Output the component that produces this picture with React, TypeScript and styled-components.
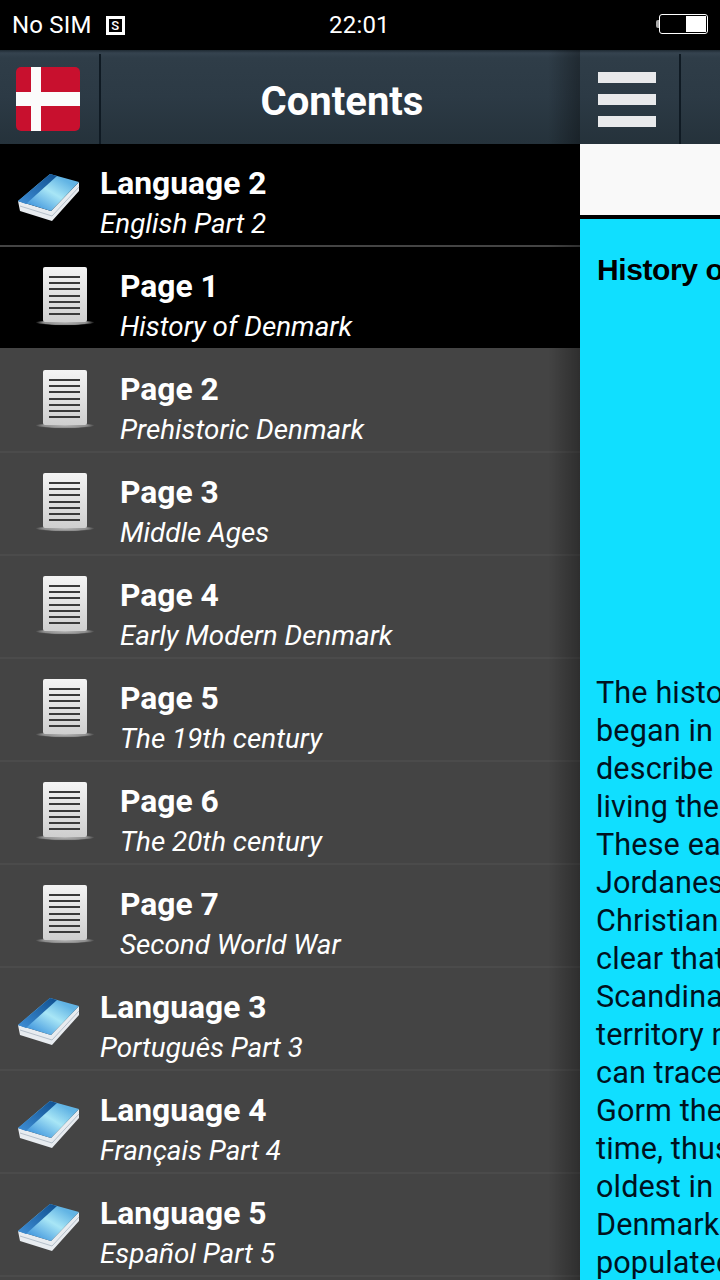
import styled, { createGlobalStyle } from "styled-components";

const GlobalStyle = createGlobalStyle`
    html, body {
        margin: 0;
        padding: 0;
        background: #000;
    }

    * {
        box-sizing: border-box;
    }
`;

const Screen = styled.div`
    width: 720px;
    height: 1280px;
    overflow: hidden;
    font-family: Roboto, "Liberation Sans", sans-serif;
    display: flex;
    flex-direction: column;
`;

const StatusBar = styled.div`
    height: 50px;
    flex: none;
    background: #000;
    color: #fff;
    display: flex;
    align-items: center;
    position: relative;
    padding: 0 12px;
    font-size: 24px;
    letter-spacing: 0.2px;
`;

const SimBadge = styled.span`
    width: 19px;
    height: 19px;
    margin-left: 14px;
    border: 3px solid #fff;
    font-size: 13px;
    font-weight: 500;
    line-height: 13px;
    text-align: center;
    letter-spacing: 0;
`;

const Clock = styled.span`
    position: absolute;
    left: 329px;
    top: 10px;
    line-height: 30px;
`;

const Battery = styled.div`
    position: absolute;
    left: 659px;
    top: 14px;
    width: 49px;
    height: 20px;
    border: 1.5px solid #fff;
    border-radius: 3px;
    padding: 1px;
    display: flex;
    justify-content: flex-end;

    &::before {
        content: "";
        position: absolute;
        left: -4px;
        top: 5px;
        width: 3px;
        height: 8px;
        border-radius: 2px 0 0 2px;
        background: #aaa;
    }
`;

const BatteryFill = styled.div`
    width: 20px;
    background: #fff;
`;

const Body = styled.div`
    flex: 1;
    display: flex;
    min-height: 0;
`;

const Drawer = styled.aside`
    width: 580px;
    flex: none;
    position: relative;
    background: #444;
    display: flex;
    flex-direction: column;

    &::after {
        content: "";
        position: absolute;
        top: 0;
        bottom: 0;
        right: 0;
        width: 32px;
        background: linear-gradient(to right, rgba(0, 0, 0, 0), rgba(0, 0, 0, 0.32));
        pointer-events: none;
    }
`;

const Bar = styled.header`
    height: 94px;
    flex: none;
    display: flex;
    background: linear-gradient(to bottom, #1f2a33 0, #35434f 3px, #2f3d48 8px, #2c3a45 50%, #25323b 100%);
`;

const IconCell = styled.div`
    width: 99px;
    flex: none;
    display: flex;
    align-items: center;
    justify-content: center;
    padding-right: 3px;
    padding-top: 4px;
`;

const Divider = styled.div`
    width: 2px;
    flex: none;
    margin-top: 4px;
    background: #0f1a23;
`;

const BarTitle = styled.h1`
    flex: 1;
    margin: 0;
    color: #fff;
    font-size: 40px;
    font-weight: 700;
    display: flex;
    align-items: center;
    justify-content: center;
    padding: 8px 0 0 3px;
`;

const Menu = styled.div`
    display: flex;
    flex-direction: column;
`;

const Row = styled.div<{ $active?: boolean; $indent?: boolean }>`
    height: 103px;
    flex: none;
    display: flex;
    align-items: center;
    background: ${(p) => (p.$active ? "#000" : "#444")};
    border-bottom: 2px solid ${(p) => (p.$active ? "#444" : "#4b4b4b")};
    padding-left: ${(p) => (p.$indent ? "36px" : "18px")};
`;

const RowIcon = styled.div<{ $indent?: boolean }>`
    width: ${(p) => (p.$indent ? "84px" : "82px")};
    flex: none;
    display: flex;
    padding-top: ${(p) => (p.$indent ? "0" : "4px")};
    padding-bottom: ${(p) => (p.$indent ? "2px" : "0")};
`;

const RowText = styled.div`
    color: #fff;
    display: flex;
    flex-direction: column;
    padding-top: 17px;
`;

const RowTitle = styled.div`
    font-size: 31.8px;
    font-weight: 700;
    line-height: 40px;
`;

const RowSubtitle = styled.div`
    font-size: 27.8px;
    font-style: italic;
    line-height: 40px;
    margin-top: 1px;
`;

const Article = styled.main`
    width: 140px;
    flex: none;
    overflow: hidden;
    display: flex;
    flex-direction: column;
`;

const ArticleBar = styled(Bar)`
    width: 100%;
`;

const MenuCell = styled.div`
    width: 99px;
    flex: none;
    display: flex;
    flex-direction: column;
    align-items: center;
    justify-content: center;
    gap: 11px;
    padding-right: 5px;
    padding-top: 5px;
`;

const MenuLine = styled.span`
    width: 58px;
    height: 11px;
    background: #e8e9eb;
`;

const Banner = styled.div`
    height: 71px;
    flex: none;
    background: #f9f9f9;
`;

const Content = styled.div`
    flex: 1;
    margin-top: 4px;
    background: #10dfff;
    color: #00121f;
    padding: 33px 0 0 16px;
    white-space: nowrap;
`;

const Heading = styled.div`
    font-family: "Liberation Sans", Arial, sans-serif;
    font-size: 30px;
    font-weight: 700;
    line-height: 36px;
    color: #000;
    letter-spacing: -0.4px;
    padding-left: 1px;
`;

const Spacer = styled.div`
    height: 386px;
`;

const TextLine = styled.div`
    font-size: 30.6px;
    line-height: 38px;
    letter-spacing: 0.12px;
`;

const Flag = () => (
    <svg width="64" height="64" viewBox="0 0 64 64">
        <rect width="64" height="64" rx="5" fill="#c8102e" />
        <rect x="15" width="10" height="64" fill="#fbfbfb" />
        <rect y="25" width="64" height="14" fill="#fbfbfb" />
    </svg>
);

const BookIcon = () => (
    <svg width="62" height="48" viewBox="0 0 62 48">
        <defs>
            <linearGradient id="bookCover" x1="0.2" y1="0.8" x2="0.8" y2="0.2">
                <stop offset="0" stopColor="#4c9fe0" />
                <stop offset="0.55" stopColor="#a8e6f6" />
                <stop offset="1" stopColor="#62b4e4" />
            </linearGradient>
            <linearGradient id="bookSpine" x1="0" y1="1" x2="1" y2="0">
                <stop offset="0" stopColor="#3f8fd6" />
                <stop offset="1" stopColor="#0f4f8f" />
            </linearGradient>
        </defs>
        <polygon points="0,28 33,38 61,9 61,18 34,48 2,38" fill="#e8ecf0" />
        <polyline points="2,33 34,43 61,14" fill="none" stroke="#b5c0cb" strokeWidth="1" />
        <polygon points="32,1 61,9 33,38 0,28" fill="url(#bookCover)" />
        <polygon points="32,1 39,3 8,31 0,28" fill="url(#bookSpine)" />
    </svg>
);

const PageIcon = () => (
    <svg width="58" height="60" viewBox="0 0 58 60">
        <defs>
            <linearGradient id="pageFill" x1="0" y1="0" x2="0" y2="1">
                <stop offset="0" stopColor="#f4f4f4" />
                <stop offset="1" stopColor="#cfcfcf" />
            </linearGradient>
            <radialGradient id="pageBase">
                <stop offset="0" stopColor="#b8b8b8" />
                <stop offset="0.75" stopColor="#8d8d8d" />
                <stop offset="1" stopColor="#8d8d8d" stopOpacity="0.1" />
            </radialGradient>
        </defs>
        <ellipse cx="29" cy="55.5" rx="29" ry="3" fill="url(#pageBase)" />
        <rect x="7" y="0" width="44" height="55" rx="2" fill="url(#pageFill)" />
        {[9, 15, 21, 28, 34, 40, 46].map((y) => (
            <rect key={y} x="13" y={y} width="31" height="2" fill="#3a3a3a" />
        ))}
    </svg>
);

const entries = [
    { title: "Language 2", subtitle: "English Part 2", book: true, active: true },
    { title: "Page 1", subtitle: "History of Denmark", active: true },
    { title: "Page 2", subtitle: "Prehistoric Denmark" },
    { title: "Page 3", subtitle: "Middle Ages" },
    { title: "Page 4", subtitle: "Early Modern Denmark" },
    { title: "Page 5", subtitle: "The 19th century" },
    { title: "Page 6", subtitle: "The 20th century" },
    { title: "Page 7", subtitle: "Second World War" },
    { title: "Language 3", subtitle: "Português Part 3", book: true },
    { title: "Language 4", subtitle: "Français Part 4", book: true },
    { title: "Language 5", subtitle: "Español Part 5", book: true },
];

const lines = [
    "The history of Denmark",
    "began in the 8th century",
    "describe the area and",
    "living there, the Danes.",
    "These early documents",
    "Jordanes and Procopius.",
    "Christianization it is",
    "clear that the Danes of",
    "Scandinavia held the",
    "territory now Denmark",
    "can trace its kings to",
    "Gorm the Old. At that",
    "time, thus making it the",
    "oldest in the world.",
    "Denmark was sparsely",
    "populated",
];

const App = () => {
    return (
        <Screen>
            <GlobalStyle />
            <StatusBar>
                No SIM
                <SimBadge>S</SimBadge>
                <Clock>22:01</Clock>
                <Battery>
                    <BatteryFill />
                </Battery>
            </StatusBar>
            <Body>
                <Drawer>
                    <Bar>
                        <IconCell>
                            <Flag />
                        </IconCell>
                        <Divider />
                        <BarTitle>Contents</BarTitle>
                    </Bar>
                    <Menu>
                        {entries.map((entry) => (
                            <Row key={entry.title} $active={entry.active} $indent={!entry.book}>
                                <RowIcon $indent={!entry.book}>
                                    {entry.book ? <BookIcon /> : <PageIcon />}
                                </RowIcon>
                                <RowText>
                                    <RowTitle>{entry.title}</RowTitle>
                                    <RowSubtitle>{entry.subtitle}</RowSubtitle>
                                </RowText>
                            </Row>
                        ))}
                    </Menu>
                </Drawer>
                <Article>
                    <ArticleBar>
                        <MenuCell>
                            <MenuLine />
                            <MenuLine />
                            <MenuLine />
                        </MenuCell>
                        <Divider />
                    </ArticleBar>
                    <Banner />
                    <Content>
                        <Heading>History of Denmark</Heading>
                        <Spacer />
                        {lines.map((line) => (
                            <TextLine key={line}>{line}</TextLine>
                        ))}
                    </Content>
                </Article>
            </Body>
        </Screen>
    );
};

export default App;
